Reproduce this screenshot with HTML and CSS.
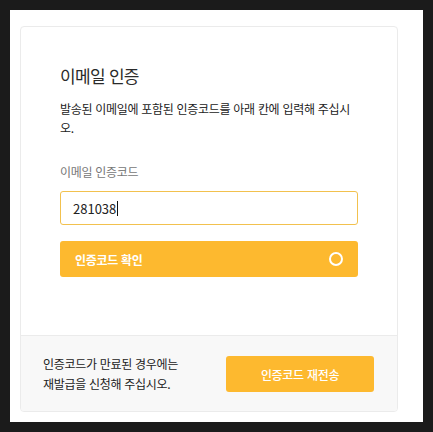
FILE: index.html
```html
<!DOCTYPE html>
<html lang="ko">
<head>
<meta charset="utf-8">
<link rel="stylesheet" href="styles.css">
</head>
<body>
<div class="page">
  <div class="card">
    <div class="card-body">
      <h1 class="title">이메일 인증</h1>
      <p class="desc">발송된 이메일에 포함된 인증코드를 아래 칸에 입력해 주십시오.</p>
      <label class="label">이메일 인증코드</label>
      <div class="input"><span class="value">281038</span><span class="caret"></span></div>
      <button class="btn btn-confirm"><span>인증코드 확인</span><span class="spinner"></span></button>
    </div>
    <div class="card-footer">
      <p class="footer-text">인증코드가 만료된 경우에는<br>재발급을 신청해 주십시오.</p>
      <button class="btn btn-resend">인증코드 재전송</button>
    </div>
  </div>
</div>
</body>
</html>
```
FILE: styles.css
```css
* { box-sizing: border-box; }
html, body { margin: 0; padding: 0; }
body {
  background: #1b1b1b;
  padding: 10px;
  width: 433px;
  height: 432px;
  font-family: "Noto Sans CJK KR", "Noto Sans", sans-serif;
  color: #222;
}
.page {
  background: #fff;
  width: 413px;
  height: 412px;
  padding: 16px 25px 0 10px;
}
.card {
  border: 1px solid #ebebeb;
  border-radius: 4px;
  overflow: hidden;
}
.card-body {
  padding: 37px 39px 58px 39px;
}
.title {
  margin: 0;
  font-size: 17px;
  line-height: 24px;
  font-weight: 400;
  letter-spacing: -0.7px;
  color: #2a2a2a;
}
.desc {
  margin: 11px 0 0;
  font-size: 12px;
  line-height: 19px;
  letter-spacing: -0.3px;
  color: #222;
}
.label {
  display: block;
  margin-top: 26px;
  font-size: 12px;
  line-height: 18px;
  letter-spacing: -0.3px;
  color: #777;
}
.input {
  margin-top: 10px;
  height: 34px;
  border: 1px solid #f2c14e;
  border-radius: 3px;
  display: flex;
  align-items: center;
  padding-left: 12px;
  font-size: 13px;
  color: #222;
}
.caret {
  width: 1px;
  height: 15px;
  background: #111;
  margin-left: 1px;
}
.btn {
  border: none;
  background: #fdb92f;
  color: #fff;
  font-family: inherit;
  border-radius: 3px;
  font-size: 12px;
  letter-spacing: -0.3px;
  font-weight: 700;
}
.btn-confirm {
  margin-top: 16px;
  width: 100%;
  height: 36px;
  display: flex;
  align-items: center;
  justify-content: space-between;
  padding: 0 15px;
}
.spinner {
  width: 14px;
  height: 14px;
  border: 2px solid #fff;
  border-radius: 50%;
}
.card-footer {
  background: #f8f8f8;
  border-top: 1px solid #ebebeb;
  padding: 18px 23px 17px 22px;
  display: flex;
  align-items: center;
  justify-content: space-between;
}
.footer-text {
  margin: 0;
  font-size: 12px;
  line-height: 20px;
  letter-spacing: -0.3px;
  color: #222;
}
.btn-resend {
  width: 148px;
  height: 36px;
  font-weight: 500;
}
```
